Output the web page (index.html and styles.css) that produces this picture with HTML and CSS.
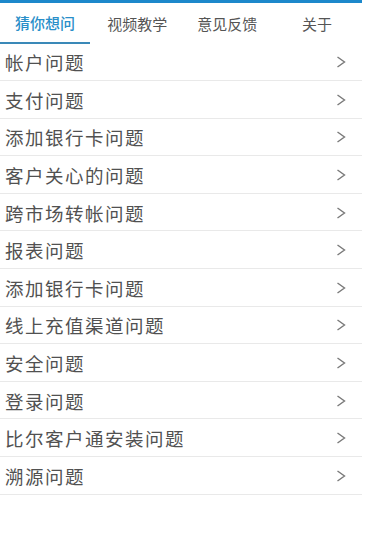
FILE: index.html
```html
<!DOCTYPE html>
<html lang="zh-CN">
<head>
<meta charset="utf-8">
<title>帮助</title>
<link rel="stylesheet" href="styles.css">
</head>
<body>
<div class="app">
  <nav class="tabs">
    <div class="tab active">猜你想问</div>
    <div class="tab">视频教学</div>
    <div class="tab">意见反馈</div>
    <div class="tab">关于</div>
  </nav>
  <ul class="list">
    <li class="row"><span class="label">帐户问题</span><svg class="chev" viewBox="0 0 10 12"><polyline points="1.5,1 8.5,6 1.5,11"/></svg></li>
    <li class="row"><span class="label">支付问题</span><svg class="chev" viewBox="0 0 10 12"><polyline points="1.5,1 8.5,6 1.5,11"/></svg></li>
    <li class="row"><span class="label">添加银行卡问题</span><svg class="chev" viewBox="0 0 10 12"><polyline points="1.5,1 8.5,6 1.5,11"/></svg></li>
    <li class="row"><span class="label">客户关心的问题</span><svg class="chev" viewBox="0 0 10 12"><polyline points="1.5,1 8.5,6 1.5,11"/></svg></li>
    <li class="row"><span class="label">跨市场转帐问题</span><svg class="chev" viewBox="0 0 10 12"><polyline points="1.5,1 8.5,6 1.5,11"/></svg></li>
    <li class="row"><span class="label">报表问题</span><svg class="chev" viewBox="0 0 10 12"><polyline points="1.5,1 8.5,6 1.5,11"/></svg></li>
    <li class="row"><span class="label">添加银行卡问题</span><svg class="chev" viewBox="0 0 10 12"><polyline points="1.5,1 8.5,6 1.5,11"/></svg></li>
    <li class="row"><span class="label">线上充值渠道问题</span><svg class="chev" viewBox="0 0 10 12"><polyline points="1.5,1 8.5,6 1.5,11"/></svg></li>
    <li class="row"><span class="label">安全问题</span><svg class="chev" viewBox="0 0 10 12"><polyline points="1.5,1 8.5,6 1.5,11"/></svg></li>
    <li class="row"><span class="label">登录问题</span><svg class="chev" viewBox="0 0 10 12"><polyline points="1.5,1 8.5,6 1.5,11"/></svg></li>
    <li class="row"><span class="label">比尔客户通安装问题</span><svg class="chev" viewBox="0 0 10 12"><polyline points="1.5,1 8.5,6 1.5,11"/></svg></li>
    <li class="row"><span class="label">溯源问题</span><svg class="chev" viewBox="0 0 10 12"><polyline points="1.5,1 8.5,6 1.5,11"/></svg></li>
  </ul>
</div>
</body>
</html>
```
FILE: styles.css
```css
html, body {
  margin: 0;
  padding: 0;
  background: #ffffff;
}
body {
  font-family: "Noto Sans CJK SC", "Noto Sans", sans-serif;
}
.app {
  width: 362px;
}
.tabs {
  display: flex;
  border-top: 3px solid #1c88cb;
  height: 40.5px;
  box-sizing: content-box;
}
.tab {
  flex: 1 1 0;
  display: flex;
  align-items: center;
  justify-content: center;
  font-size: 15px;
  color: #555555;
  padding-top: 1px;
  box-sizing: border-box;
}
.tab.active {
  color: #2a8fc9;
  font-weight: 500;
  border-bottom: 2px solid #3a89b8;
  margin-right: 2.5px;
}
.list {
  list-style: none;
  margin: 0;
  padding: 0;
}
.row {
  height: 37.6px;
  box-sizing: border-box;
  border-bottom: 1px solid #e9e9e9;
  display: flex;
  align-items: center;
  justify-content: space-between;
  padding: 1px 16px 0 5px;
}
.label {
  font-size: 18.5px;
  color: #515151;
  letter-spacing: 1.5px;
}
.chev {
  width: 10px;
  height: 12px;
  fill: none;
  stroke: #7a7a7a;
  stroke-width: 1.4;
}
```
